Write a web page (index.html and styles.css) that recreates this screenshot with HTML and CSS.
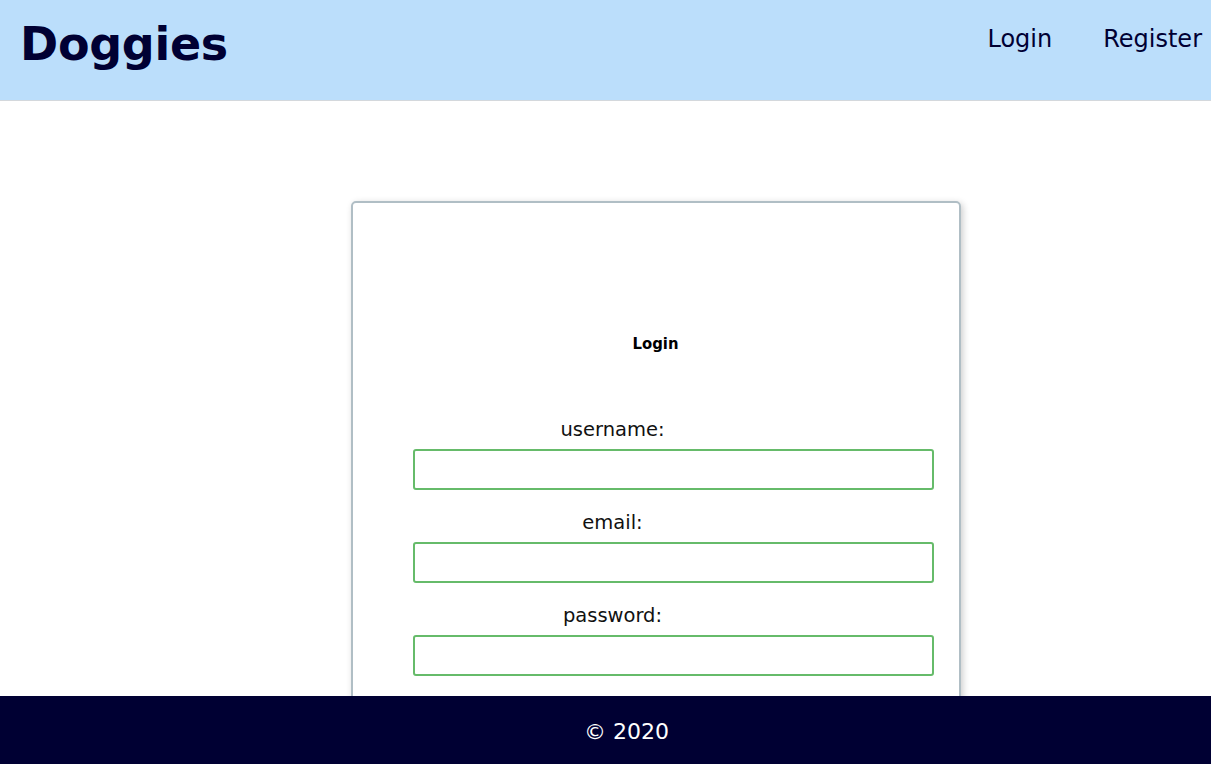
FILE: index.html
```html
<!DOCTYPE html>
<html lang="en">
<head>
<meta charset="utf-8">
<title>Doggies</title>
<link rel="stylesheet" href="styles.css">
</head>
<body>
<header class="topbar">
  <h1 class="brand">Doggies</h1>
  <nav class="nav">
    <a class="nav-link" href="#">Login</a>
    <a class="nav-link" href="#">Register</a>
  </nav>
</header>
<main class="main">
  <section class="card">
    <h2 class="card-title">Login</h2>
    <form class="form">
      <div class="field">
        <label class="label" for="u">username:</label>
        <input class="input" id="u" type="text">
      </div>
      <div class="field">
        <label class="label" for="e">email:</label>
        <input class="input" id="e" type="email">
      </div>
      <div class="field">
        <label class="label" for="p">password:</label>
        <input class="input" id="p" type="password">
      </div>
    </form>
  </section>
</main>
<footer class="footer">© 2020</footer>
</body>
</html>
```

FILE: styles.css
```css
* { box-sizing: border-box; }
html, body { margin: 0; padding: 0; }
body {
  font-family: "DejaVu Sans", "Open Sans", sans-serif;
  color: #000;
  background: #fff;
  height: 764px;
  overflow: hidden;
}
.topbar {
  height: 101px;
  background: #bbdefb;
  border-bottom: 1px solid #d4d8dc;
  display: flex;
  align-items: flex-start;
  justify-content: space-between;
  padding: 0 9px 0 20px;
}
.brand {
  margin: 14px 0 0;
  font-size: 46px;
  font-weight: 700;
  color: #000033;
  letter-spacing: -0.3px;
  line-height: 60px;
}
.nav {
  display: flex;
  gap: 51px;
  margin-top: 23px;
}
.nav-link {
  font-size: 24px;
  line-height: 32px;
  color: #000033;
  text-decoration: none;
}
.main {
  display: flex;
  justify-content: center;
  padding: 100px 0 0 100px;
}
.card {
  width: 610px;
  height: 540px;
  border: 2px solid #b0bec5;
  border-radius: 5px;
  box-shadow: 2px 2px 7px rgba(0,0,0,0.2);
  padding: 126px 0 0 60px;
}
.card-title {
  margin: 0 0 59px;
  text-align: center;
  padding-right: 60px;
  font-family: "DejaVu Sans Condensed", "DejaVu Sans", sans-serif;
  font-stretch: condensed;
  font-size: 16.5px;
  font-weight: 700;
  line-height: 30px;
}
.form {
  display: flex;
  flex-direction: column;
  gap: 21px;
}
.field {
  display: flex;
  flex-direction: column;
  gap: 7px;
}
.label {
  width: 400px;
  text-align: center;
  font-size: 19.5px;
  line-height: 24px;
  color: #111;
}
.input {
  width: 521px;
  height: 41px;
  border: 2px solid #66bb6a;
  border-radius: 3px;
  outline: none;
  background: #fff;
}
.footer {
  position: fixed;
  left: 0;
  right: 0;
  bottom: 0;
  height: 68px;
  background: #000033;
  color: #fff;
  display: flex;
  align-items: center;
  justify-content: center;
  font-size: 22px;
  padding: 2px 0 0 42px;
}
```
